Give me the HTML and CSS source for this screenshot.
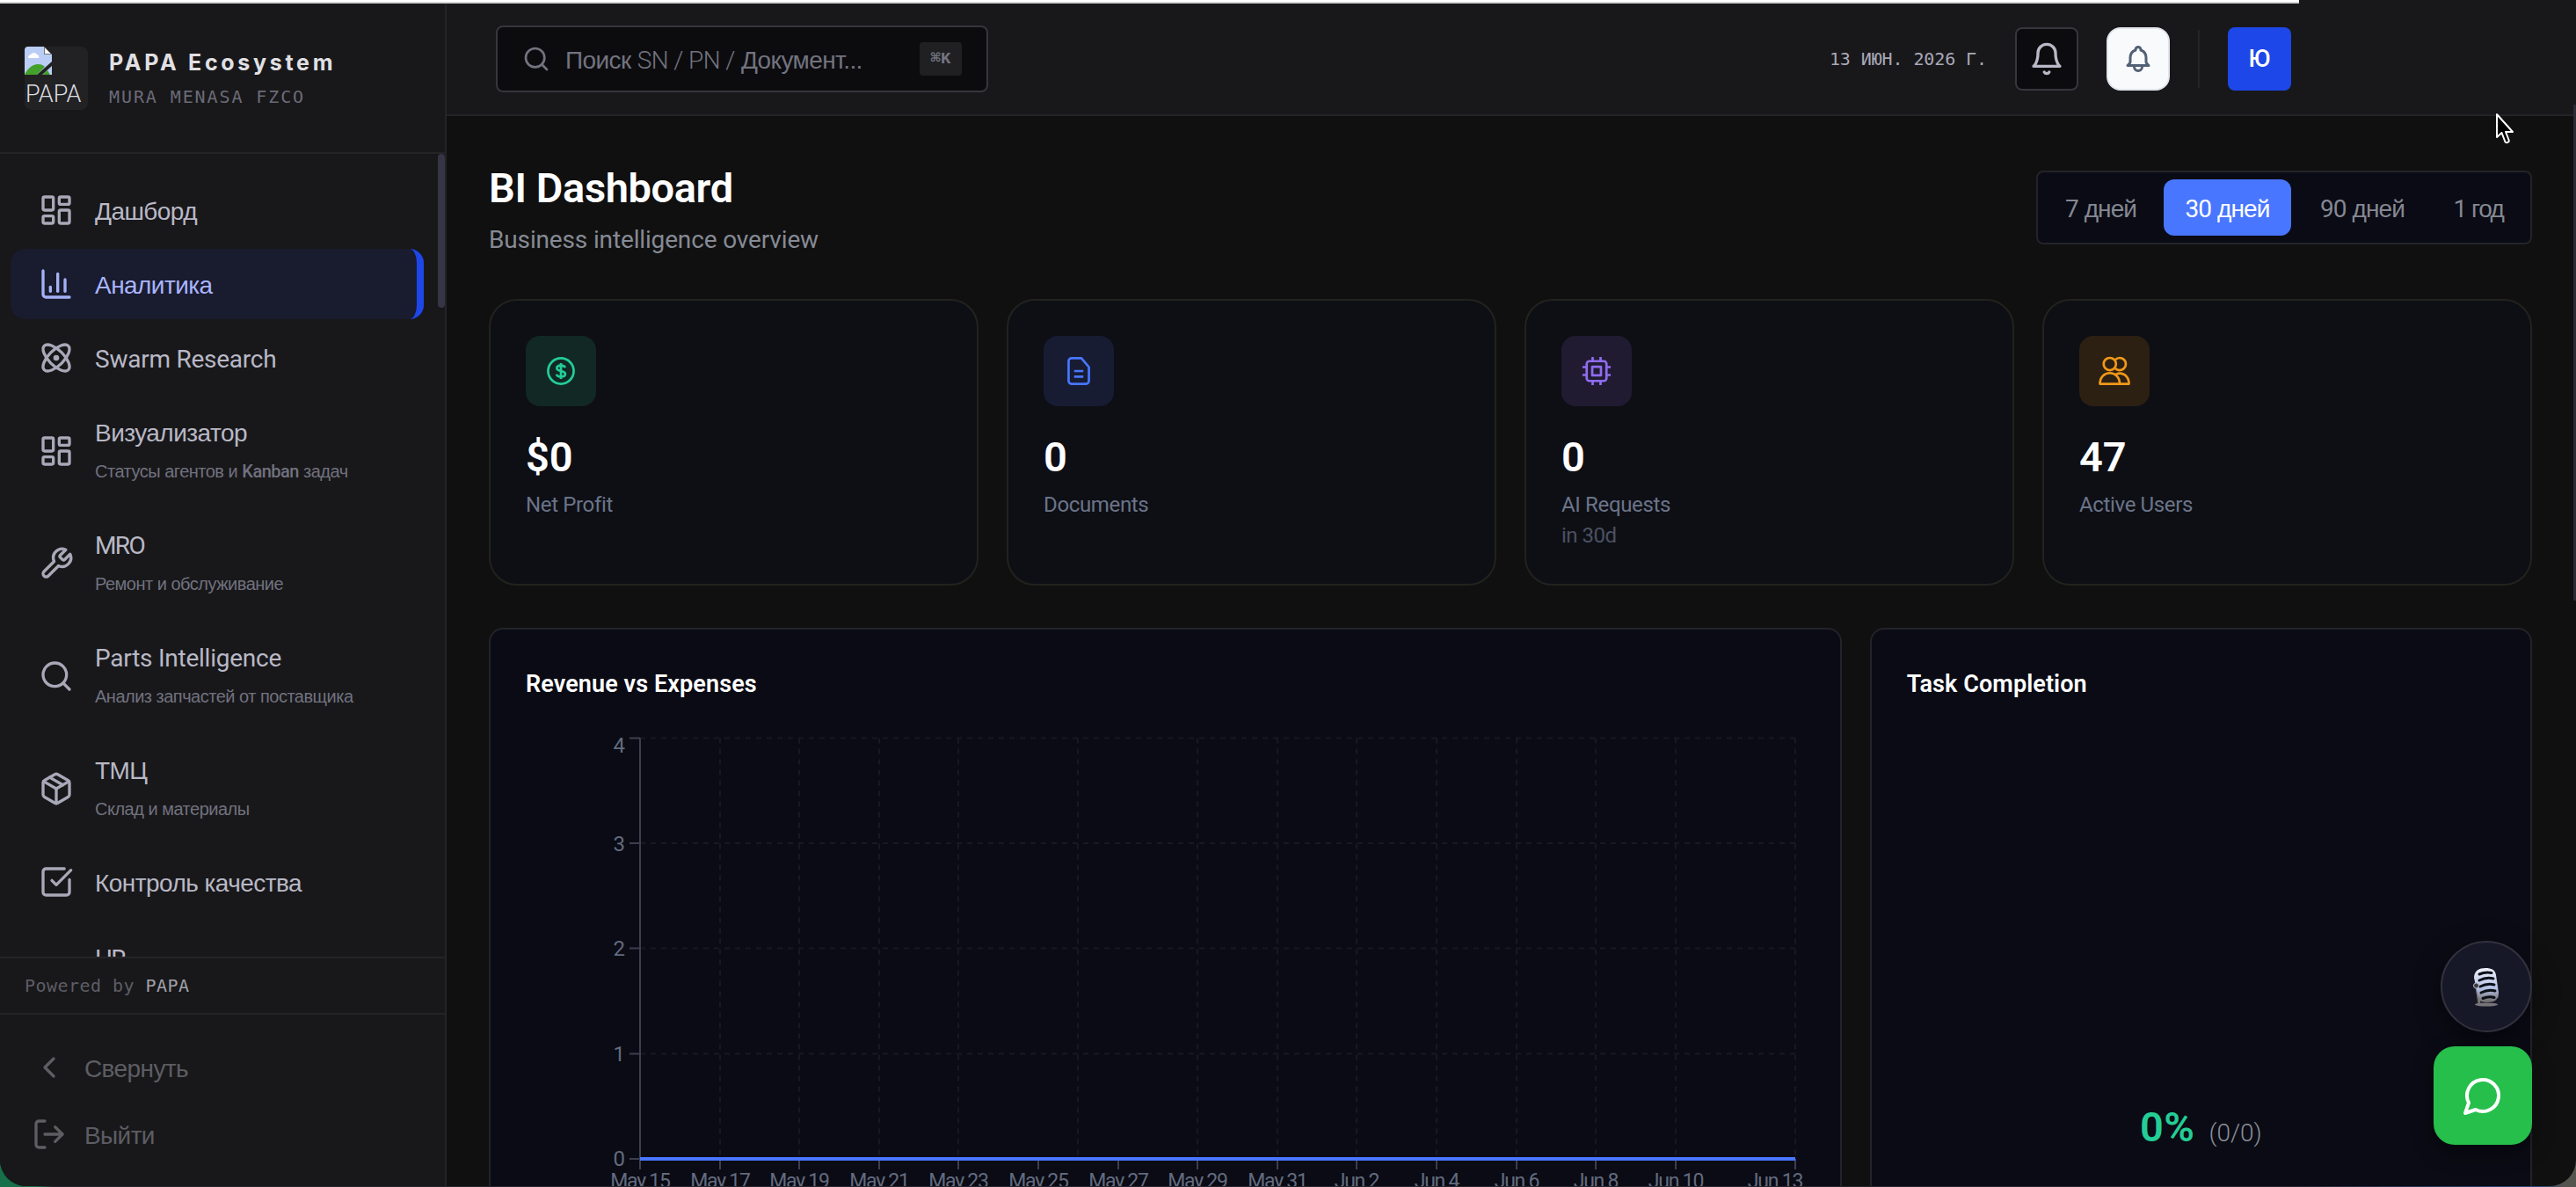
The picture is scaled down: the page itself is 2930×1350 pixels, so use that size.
FILE: index.html
```html
<!DOCTYPE html>
<html lang="ru">
<head>
  <meta charset="UTF-8">
  <meta name="viewport" content="width=device-width, initial-scale=1.0">
  <title>BI Dashboard | PAPA Ecosystem</title>
  <link rel="stylesheet" href="styles.css">
</head>
<body>
  <div class="app">
    <aside class="sidebar">
      <div class="brand">
        <div class="brand-logo">
          <svg class="broken" viewBox="0 0 32 32">
            <path d="M0 4a4 4 0 0 1 4-4h18v9h9v8L14 32H0z" fill="#b9cdf5"/>
            <path d="M20 32l11-10v10z" fill="#b9cdf5"/>
            <path d="M4 13a4 4 0 0 1 3-4 4 4 0 0 1 7 0 3 3 0 0 1 2 4z" fill="#fff"/>
            <path d="M0 32c3-7 9-12 15-12 4 0 6 1 8 3L14 32zM20 32l6-5 3 5z" fill="#43a02a"/>
            <path d="M22.500.5v8h8z" fill="#fff" stroke="#777" stroke-width="1"/>
          </svg>
          <span class="brand-alt">PAPA</span>
        </div>
        <div class="brand-text">
          <div class="brand-name">PAPA Ecosystem</div>
          <div class="brand-sub">MURA MENASA FZCO</div>
        </div>
      </div>

      <nav class="nav">
        <a class="nav-item">
          <svg class="icon" viewBox="0 0 24 24"><rect x="3" y="3" width="7" height="9" rx="1"/><rect x="14" y="3" width="7" height="5" rx="1"/><rect x="14" y="12" width="7" height="9" rx="1"/><rect x="3" y="16" width="7" height="5" rx="1"/></svg>
          <div class="nav-label">Дашборд</div>
        </a>
        <a class="nav-item active">
          <svg class="icon" viewBox="0 0 24 24"><path d="M3 3v16a2 2 0 0 0 2 2h16"/><path d="M18 17V9"/><path d="M13 17V5"/><path d="M8 17v-3"/></svg>
          <div class="nav-label">Аналитика</div>
        </a>
        <a class="nav-item">
          <svg class="icon" viewBox="0 0 24 24"><circle cx="12" cy="12" r="1"/><path d="M20.200 20.200c2.040-2.030.020-7.360-4.500-11.900-4.540-4.520-9.870-6.540-11.900-4.500-2.040 2.030-.020 7.360 4.500 11.900 4.540 4.520 9.870 6.540 11.900 4.500Z"/><path d="M15.700 15.700c4.520-4.540 6.540-9.870 4.500-11.900-2.030-2.040-7.360-.020-11.900 4.500-4.520 4.540-6.540 9.870-4.500 11.900 2.030 2.040 7.360.020 11.900-4.500Z"/></svg>
          <div class="nav-label latin">Swarm Research</div>
        </a>
        <a class="nav-item">
          <svg class="icon" viewBox="0 0 24 24"><rect x="3" y="3" width="7" height="9" rx="1"/><rect x="14" y="3" width="7" height="5" rx="1"/><rect x="14" y="12" width="7" height="9" rx="1"/><rect x="3" y="16" width="7" height="5" rx="1"/></svg>
          <div>
            <div class="nav-label">Визуализатор</div>
            <div class="nav-sub">Статусы агентов и <b>Kanban</b> задач</div>
          </div>
        </a>
        <a class="nav-item">
          <svg class="icon" viewBox="0 0 24 24"><path d="M14.700 6.300a1 1 0 0 0 0 1.400l1.600 1.600a1 1 0 0 0 1.400 0l3.770-3.770a6 6 0 0 1-7.940 7.940l-6.910 6.910a2.120 2.120 0 0 1-3-3l6.910-6.910a6 6 0 0 1 7.940-7.940l-3.760 3.760z"/></svg>
          <div>
            <div class="nav-label latin caps">MRO</div>
            <div class="nav-sub">Ремонт и обслуживание</div>
          </div>
        </a>
        <a class="nav-item">
          <svg class="icon" viewBox="0 0 24 24"><circle cx="11" cy="11" r="8"/><path d="m21 21-4.300-4.300"/></svg>
          <div>
            <div class="nav-label latin">Parts Intelligence</div>
            <div class="nav-sub">Анализ запчастей от поставщика</div>
          </div>
        </a>
        <a class="nav-item">
          <svg class="icon" viewBox="0 0 24 24"><path d="M11 21.730a2 2 0 0 0 2 0l7-4A2 2 0 0 0 21 16V8a2 2 0 0 0-1-1.730l-7-4a2 2 0 0 0-2 0l-7 4A2 2 0 0 0 3 8v8a2 2 0 0 0 1 1.730z"/><path d="M12 22V12"/><path d="M3.300 7 12 12l8.700-5"/><path d="m7.500 4.270 9 5.150"/></svg>
          <div>
            <div class="nav-label">ТМЦ</div>
            <div class="nav-sub">Склад и материалы</div>
          </div>
        </a>
        <a class="nav-item">
          <svg class="icon" viewBox="0 0 24 24"><path d="M21 10.500V19a2 2 0 0 1-2 2H5a2 2 0 0 1-2-2V5a2 2 0 0 1 2-2h12.500"/><path d="m9 11 3 3L22 4"/></svg>
          <div class="nav-label">Контроль качества</div>
        </a>
        <a class="nav-item tall">
          <svg class="icon" viewBox="0 0 24 24"></svg>
          <div class="nav-label latin caps">HR</div>
        </a>
        <span class="nav-scroll"></span>
      </nav>

      <div class="powered">Powered by <span>PAPA</span></div>
      <div class="side-actions">
        <a class="side-action">
          <svg class="icon" viewBox="0 0 24 24"><path d="m15 18-6-6 6-6"/></svg>
          <span>Свернуть</span>
        </a>
        <a class="side-action">
          <svg class="icon" viewBox="0 0 24 24"><path d="M9 21H5a2 2 0 0 1-2-2V5a2 2 0 0 1 2-2h4"/><path d="m16 17 5-5-5-5"/><path d="M21 12H9"/></svg>
          <span>Выйти</span>
        </a>
      </div>
    </aside>

    <div class="main">
      <header class="topbar">
        <div class="search">
          <svg class="icon" viewBox="0 0 24 24"><circle cx="11" cy="11" r="8"/><path d="m21 21-4.300-4.300"/></svg>
          <span class="search-text">Поиск <i>SN / PN /</i> Документ...</span>
          <kbd>⌘K</kbd>
        </div>
        <div class="top-right">
          <span class="date">13 ИЮН. 2026 Г.</span>
          <button class="square bell">
            <svg class="icon" viewBox="0 0 24 24"><path d="M6 8a6 6 0 0 1 12 0c0 7 3 9 3 9H3s3-2 3-9"/><path d="M10.300 21a1.940 1.940 0 0 0 3.400 0"/></svg>
          </button>
          <button class="square bell-light">
            <svg class="icon" viewBox="0 0 24 24"><path d="M15 17h5l-1.400-1.400A2 2 0 0 1 18 14.200V11a6 6 0 0 0-4-5.660V5a2 2 0 1 0-4 0v.340A6 6 0 0 0 6 11v3.200c0 .530-.210 1.040-.600 1.400L4 17h5m6 0v1a3 3 0 1 1-6 0v-1m6 0H9"/></svg>
          </button>
          <span class="divider"></span>
          <div class="square avatar">Ю</div>
        </div>
      </header>

      <main class="content">
        <div class="page-head">
          <div>
            <h1>BI Dashboard</h1>
            <p>Business intelligence overview</p>
          </div>
          <div class="range">
            <button class="r7"><i>7</i> дней</button>
            <button class="r30 on"><i>30</i> дней</button>
            <button class="r90"><i>90</i> дней</button>
            <button class="r365"><i>1</i> год</button>
          </div>
        </div>

        <section class="stats">
          <div class="stat">
            <div class="tile green"><svg class="icon" viewBox="0 0 24 24"><circle cx="12" cy="12" r="9.700"/><path d="M15.200 9.400C14.900 8.300 13.700 7.700 12 7.700c-1.800 0-3.100.8-3.100 2.100 0 3 6.400 1.400 6.400 4.400 0 1.300-1.400 2.100-3.300 2.100-1.800 0-3.100-.7-3.300-1.900M12 6v12"/></svg></div>
            <div class="value">$0</div>
            <div class="label">Net Profit</div>
          </div>
          <div class="stat">
            <div class="tile blue"><svg class="icon" viewBox="0 0 24 24"><path d="M14 2.300H6.500a2.200 2.200 0 0 0-2.200 2.200v15a2.200 2.200 0 0 0 2.200 2.200h11a2.200 2.200 0 0 0 2.200-2.200V9z"/><path d="M8.500 12h7M8.500 16.200h7"/></svg></div>
            <div class="value">0</div>
            <div class="label">Documents</div>
          </div>
          <div class="stat">
            <div class="tile violet"><svg class="icon" viewBox="0 0 24 24"><rect x="4.500" y="4.500" width="15" height="15" rx="2"/><rect x="8.700" y="8.700" width="6.600" height="6.600"/><path d="M9 1.300v3M15 1.300v3M9 19.700v3M15 19.700v3M1.300 9h3M1.300 15h3M19.700 9h3M19.700 15h3"/></svg></div>
            <div class="value">0</div>
            <div class="label">AI Requests</div>
            <div class="note">in 30d</div>
          </div>
          <div class="stat">
            <div class="tile amber"><svg class="icon" viewBox="0 0 24 24"><circle cx="8.500" cy="6.700" r="4.700"/><path d="M12.600 3.400a4.700 4.700 0 1 1 0 6.600"/><path d="M1 21.700c0-5 3.300-8.200 7.500-8.200s7.500 3.200 7.500 8.200zM13 14.600c5-2.500 10 1 10 7.100h-7"/></svg></div>
            <div class="value">47</div>
            <div class="label">Active Users</div>
          </div>
        </section>

        <section class="charts">
          <div class="panel wide">
            <h2>Revenue vs Expenses</h2>
            <svg class="chart" viewBox="0 0 1455 560">
              <path class="grid" d="M130 8.500H1444M130 128H1444M130 247.500H1444M130 367.500H1444"/>
              <path class="grid" d="M221 8.500V487M311 8.500V487M402 8.500V487M492 8.500V487M628 8.500V487M764 8.500V487M855 8.500V487M945 8.500V487M1036 8.500V487M1127 8.500V487M1217 8.500V487M1308 8.500V487M1444 8.500V487"/>
              <path class="axis" d="M130 8.500V487M118 8.500h12M118 128h12M118 247.500h12M118 367.500h12M118 487h12"/>
              <path class="axis" d="M130 487v12M221 487v12M311 487v12M402 487v12M492 487v12M583 487v12M674 487v12M764 487v12M855 487v12M945 487v12M1036 487v12M1127 487v12M1217 487v12M1308 487v12M1444 487v12"/>
              <path class="line" d="M130 487H1444"/>
              <g class="ylabels">
                <text x="113" y="25">4</text>
                <text x="113" y="137">3</text>
                <text x="113" y="256">2</text>
                <text x="113" y="376">1</text>
                <text x="113" y="495">0</text>
              </g>
              <g class="xlabels">
                <text x="130" y="520">May 15</text>
                <text x="221" y="520">May 17</text>
                <text x="311" y="520">May 19</text>
                <text x="402" y="520">May 21</text>
                <text x="492" y="520">May 23</text>
                <text x="583" y="520">May 25</text>
                <text x="674" y="520">May 27</text>
                <text x="764" y="520">May 29</text>
                <text x="855" y="520">May 31</text>
                <text x="945" y="520">Jun 2</text>
                <text x="1036" y="520">Jun 4</text>
                <text x="1127" y="520">Jun 6</text>
                <text x="1217" y="520">Jun 8</text>
                <text x="1308" y="520">Jun 10</text>
                <text x="1421" y="520">Jun 13</text>
              </g>
            </svg>
          </div>
          <div class="panel">
            <h2>Task Completion</h2>
            <div class="completion"><b>0%</b><span>(0/0)</span></div>
          </div>
        </section>
      </main>
    </div>
  </div>

  <div class="loading-bar"></div>
  <span class="page-scroll"></span>
  <div class="floating">
    <button class="mic">
      <svg viewBox="0 0 32 46">
        <defs>
          <linearGradient id="steel" x1="0" y1="0" x2="0" y2="1">
            <stop offset="0" stop-color="#eef2fa"/>
            <stop offset=".6" stop-color="#b4c0e6"/>
            <stop offset="1" stop-color="#6b6865"/>
          </linearGradient>
        </defs>
        <path d="M5 24l3 18M27 28l1 8" stroke="#77746f" stroke-width="3"/>
        <path d="M2 13C2 5 8 2 15 2s11 2 12 8l3 20c0 8-5 11-12 11S8 40 7 36z" fill="url(#steel)"/>
        <path d="M8 9q7-3 14-1.500M8 16q8-4 16-2M9 23q8-4 16-2M10 30q8-4 16-2M12 36.500q7-3 13-1" stroke="#0b1018" stroke-width="3" stroke-linecap="round" fill="none"/>
        <circle cx="4.500" cy="22" r="3" fill="#3b3b40" stroke="#b8bac2"/>
        <ellipse cx="16" cy="43.500" rx="13" ry="2" fill="#77757a"/>
      </svg>
    </button>
    <button class="chat">
      <svg class="icon" viewBox="0 0 24 24"><path d="M7.900 20A9 9 0 1 0 4 16.100L2 22Z"/></svg>
    </button>
  </div>
  <svg class="cursor" viewBox="0 0 22 36"><path d="M2 2v26l5.500-5 4 10.500c2 1.500 5 0 4-2.500L12 22h8z" fill="#000" stroke="#fff" stroke-width="2" stroke-linejoin="round"/></svg>
</body>
</html>
```

FILE: styles.css
```css
* {
  box-sizing: border-box;
}

body {
  margin: 0;
  height: 1350px;
  overflow: hidden;
  background: linear-gradient(90deg, #17704a 0, #17704a 40px, #26262e 60px, #26262e 2600px, #2b4a80 2890px, #55554f 2915px);
  font-family: Roboto, "Liberation Sans", sans-serif;
  color: #fff;
}

button {
  border: none;
  padding: 0;
  font: inherit;
  color: inherit;
}

i {
  font-style: normal;
}

.icon {
  width: 40px;
  height: 40px;
  flex: none;
  fill: none;
  stroke: currentColor;
  stroke-width: 2;
  stroke-linecap: round;
  stroke-linejoin: round;
}

.app {
  display: flex;
  height: 1349px;
  overflow: hidden;
  background: #101010;
  border-radius: 0 0 30px 30px;
}

/* sidebar */
.sidebar {
  display: flex;
  flex-direction: column;
  width: 508px;
  flex: none;
  background: #18181a;
  border-right: 2px solid #242427;
}

.brand {
  display: flex;
  gap: 24px;
  height: 175px;
  padding: 53px 28px 0;
  border-bottom: 2px solid #242427;
}

.brand-logo {
  width: 72px;
  height: 72px;
  border-radius: 8px;
  background: #222224;
}

.broken {
  display: block;
  width: 32px;
  height: 32px;
}

.brand-alt {
  display: block;
  padding-left: 1px;
  font-size: 27px;
  font-weight: 300;
  line-height: 44px;
  color: #dcdce0;
}

.brand-name {
  font-family: Inter, sans-serif;
  font-size: 25px;
  font-weight: 700;
  line-height: 36px;
  letter-spacing: 3.7px;
  color: #e0e0e4;
}

.brand-sub {
  font-family: "DejaVu Sans Mono", monospace;
  font-size: 20px;
  line-height: 42px;
  letter-spacing: 1.9px;
  color: #6b6b78;
}

.nav {
  position: relative;
  display: flex;
  flex-direction: column;
  gap: 4px;
  flex: 1;
  min-height: 0;
  padding: 24px 24px 0 12px;
  overflow: hidden;
}

.nav-item {
  display: flex;
  align-items: center;
  gap: 24px;
  flex: none;
  height: 80px;
  padding-left: 32px;
  border-radius: 16px;
  color: #a9a8b8;
}

.nav-item:has(.nav-sub) {
  height: 124px;
}

.nav-item.tall {
  height: 84px;
}

.nav-item.active {
  background: #191b2e;
  border-right: 8px solid #1d47e8;
  color: #a3b0f5;
}

.nav-label {
  font-family: "Liberation Sans", sans-serif;
  font-size: 28px;
  line-height: 42px;
  letter-spacing: -0.55px;
  color: #b9b8c6;
}

.nav-item > .nav-label {
  padding-top: 3px;
}

.nav-label.latin {
  font-family: Roboto, sans-serif;
  letter-spacing: -0.25px;
}

.nav-label.caps {
  letter-spacing: -1.6px;
}

.active .nav-label {
  color: #a9b5ff;
}

.nav-sub {
  margin-top: 4px;
  font-family: "Liberation Sans", sans-serif;
  font-size: 20px;
  line-height: 36px;
  letter-spacing: -0.5px;
  color: #71717f;
}

.nav-sub b {
  font-family: Roboto, sans-serif;
  font-weight: 500;
}

.nav-scroll {
  position: absolute;
  right: 0;
  top: 0;
  width: 8px;
  height: 175px;
  border-radius: 4px;
  background: #353545;
}

.powered {
  height: 66px;
  padding-left: 28px;
  border-top: 2px solid #242427;
  border-bottom: 2px solid #242427;
  font-family: "DejaVu Sans Mono", monospace;
  font-size: 20px;
  line-height: 62px;
  letter-spacing: 0.45px;
  color: #5d5d66;
}

.powered span {
  color: #a0a0a8;
}

.side-actions {
  display: flex;
  flex-direction: column;
  gap: 4px;
  height: 195px;
  padding: 24px 36px 0;
}

.side-action {
  display: flex;
  align-items: center;
  gap: 20px;
  height: 72px;
  font-family: "Liberation Sans", sans-serif;
  font-size: 28px;
  letter-spacing: -0.6px;
  color: #5d5d63;
}

.side-action span {
  padding-top: 4px;
}

/* header */
.main {
  flex: 1;
  min-width: 0;
}

.topbar {
  display: flex;
  align-items: center;
  justify-content: space-between;
  height: 132px;
  padding: 4px 324px 0 56px;
  background: #18181a;
  border-bottom: 2px solid #242427;
}

.search {
  display: flex;
  align-items: center;
  width: 560px;
  height: 76px;
  padding: 0 28px;
  background: #0c0c0f;
  border: 2px solid #36363d;
  border-radius: 8px;
  color: #73737f;
}

.search .icon {
  width: 32px;
  height: 32px;
}

.search-text {
  margin-left: 17px;
  padding-top: 3px;
  font-family: "Liberation Sans", sans-serif;
  font-size: 28px;
  letter-spacing: -0.6px;
}

.search-text i {
  font-family: Roboto, sans-serif;
  font-weight: 300;
}

kbd {
  margin-left: auto;
  width: 48px;
  height: 38px;
  border-radius: 4px;
  background: #202023;
  font: 700 19px/38px "Liberation Mono", "DejaVu Sans Mono", monospace;
  text-align: center;
}

.top-right {
  display: flex;
  align-items: center;
  gap: 32px;
}

.date {
  font-family: "DejaVu Sans Mono", monospace;
  font-size: 20px;
  letter-spacing: -0.1px;
  color: #a9a8b8;
}

.square {
  display: flex;
  align-items: center;
  justify-content: center;
  width: 72px;
  height: 72px;
  border-radius: 8px;
}

.bell {
  background: #0c0c0f;
  border: 2px solid #36363d;
  color: #b9b8c6;
}

.bell-light {
  background: #f8fafc;
  border: 2px solid #e2e6ec;
  border-radius: 16px;
  color: #526075;
}

.bell-light .icon {
  width: 36px;
  height: 36px;
}

.divider {
  width: 2px;
  height: 66px;
  background: #242427;
}

.avatar {
  background: #1d47e8;
  font-size: 27px;
  font-weight: 500;
}

/* page */
.content {
  padding: 62px 50px 0 48px;
}

.page-head {
  display: flex;
  justify-content: space-between;
  height: 146px;
}

h1 {
  margin: 0;
  font-size: 47px;
  font-weight: 600;
  line-height: 40px;
  letter-spacing: -0.4px;
}

.page-head p {
  margin: 19px 0 0;
  font-size: 28px;
  line-height: 40px;
  letter-spacing: -0.15px;
  color: #868a94;
}

.range {
  display: flex;
  gap: 8px;
  height: 84px;
  padding: 8px;
  background: #0a0b14;
  border: 2px solid #232329;
  border-radius: 8px;
}

.range button {
  padding-top: 3px;
  background: none;
  border-radius: 12px;
  font-family: "Liberation Sans", sans-serif;
  font-size: 28px;
  letter-spacing: -0.9px;
  color: #858892;
}

.range i {
  font-family: Roboto, sans-serif;
}

.range .r7 { width: 127px; }
.range .r30 { width: 145px; }
.range .r90 { width: 146px; }
.range .r365 { width: 102px; letter-spacing: -1.5px; }

.range .on {
  background: #4876ff;
  color: #fff;
}

.stats {
  display: grid;
  grid-template-columns: repeat(4, 1fr);
  gap: 32px;
  margin-bottom: 48px;
}

.stat {
  height: 326px;
  padding: 40px;
  background: #0e0f15;
  border: 2px solid #22221e;
  border-radius: 32px;
}

.tile {
  display: flex;
  align-items: center;
  justify-content: center;
  width: 80px;
  height: 80px;
  border-radius: 16px;
}

.tile .icon {
  width: 36px;
  height: 36px;
  stroke-width: 1.8;
  stroke-linecap: butt;
}

.green { background: #112825; color: #24cd95; }
.blue { background: #171c33; color: #4876ff; }
.violet { background: #201b31; color: #8f6cf0; }
.amber { background: #2c2013; color: #f09819; }

.value {
  margin-top: 32px;
  font-size: 47px;
  font-weight: 600;
  line-height: 52px;
}

.label {
  margin-top: 10px;
  font-size: 24px;
  line-height: 36px;
  letter-spacing: -0.35px;
  color: #6b7489;
}

.note {
  font-size: 24px;
  line-height: 34px;
  letter-spacing: -0.5px;
  color: #4b5162;
}

.charts {
  display: grid;
  grid-template-columns: repeat(3, 1fr);
  gap: 32px;
}

.panel {
  height: 700px;
  padding: 42px 40px 40px;
  background: #0a0b14;
  border: 2px solid #232329;
  border-radius: 16px;
}

.wide {
  grid-column: span 2;
}

h2 {
  margin: 0 0 33px;
  font-size: 27px;
  font-weight: 600;
  line-height: 40px;
  letter-spacing: 0.1px;
}

.chart {
  display: block;
  width: 1455px;
  height: 560px;
}

.grid {
  fill: none;
  stroke: #171821;
  stroke-width: 2;
  stroke-dasharray: 6 6;
}

.axis {
  fill: none;
  stroke: #3c3f4f;
  stroke-width: 2;
}

.line {
  stroke: #4876ff;
  stroke-width: 4;
}

.chart text {
  font-size: 24px;
  fill: #626a7e;
}

.ylabels {
  text-anchor: end;
}

.xlabels {
  text-anchor: middle;
}

.chart .xlabels text {
  font-size: 23px;
  letter-spacing: -1.2px;
}

.completion {
  display: flex;
  align-items: baseline;
  justify-content: center;
  gap: 16px;
  margin-top: 456px;
}

.completion b {
  font-size: 47px;
  font-weight: 600;
  color: #24cd95;
  letter-spacing: 0.5px;
}

.completion span {
  font-size: 28px;
  font-weight: 300;
  color: #8b8f99;
}

/* overlays */
.loading-bar {
  position: absolute;
  left: 0;
  top: 0;
  width: 2615px;
  height: 4px;
  background: #fff;
  border-bottom: 2px solid #d6d6d6;
}

.page-scroll {
  position: absolute;
  right: 0;
  top: 119px;
  width: 3px;
  height: 564px;
  background: #2c2c38;
}

.floating {
  position: absolute;
  right: 50px;
  top: 1070px;
  display: flex;
  flex-direction: column;
  align-items: flex-end;
  gap: 16px;
}

.mic {
  display: flex;
  align-items: center;
  justify-content: center;
  width: 104px;
  height: 104px;
  border: 2px solid #32323e;
  border-radius: 50%;
  background: #171827;
  box-shadow: 0 8px 32px rgba(0, 0, 0, 0.4);
}

.mic svg {
  width: 32px;
  height: 46px;
}

.chat {
  display: flex;
  align-items: center;
  justify-content: center;
  width: 112px;
  height: 112px;
  border-radius: 24px;
  background: #26bf4c;
  box-shadow: 0 8px 24px rgba(0, 0, 0, 0.4);
}

.chat .icon {
  width: 48px;
  height: 48px;
}

.cursor {
  position: absolute;
  left: 2838px;
  top: 128px;
  width: 22px;
  height: 36px;
}
```
